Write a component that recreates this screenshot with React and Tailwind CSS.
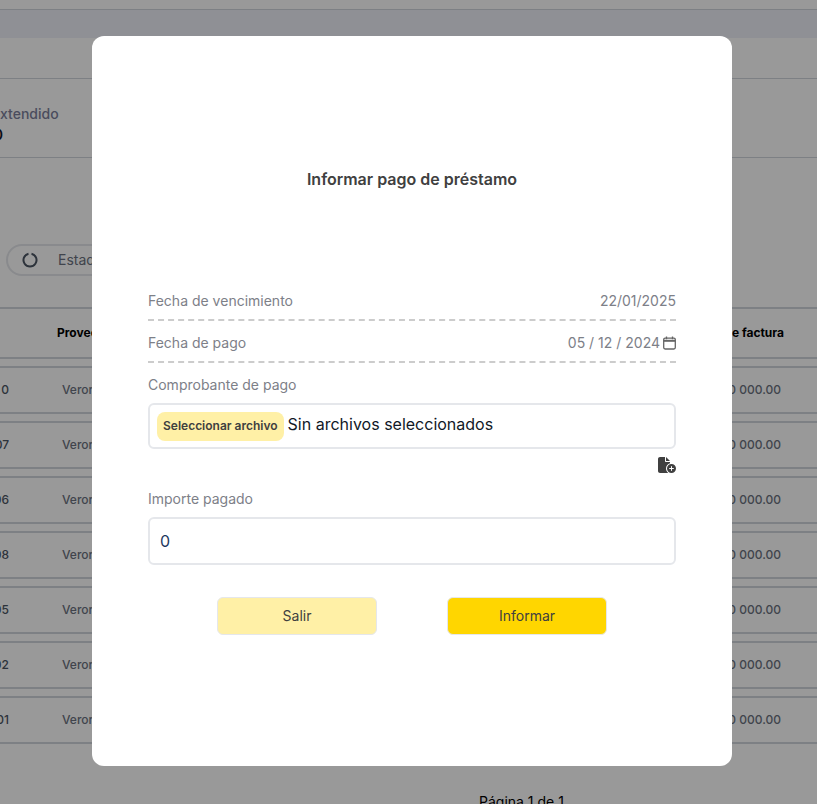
import React from 'react';
import { FaFileCirclePlus } from 'react-icons/fa6';

const rows = ['0', '07', '06', '08', '05', '02', '01'];

const CalendarIcon = () => (
  <svg width="13" height="14" viewBox="0 0 13 14" fill="none" stroke="#666666" strokeWidth="1.3">
    <rect x="0.7" y="2.2" width="11.6" height="10.8" rx="1.4" />
    <path d="M0.7 4.8h11.6" strokeWidth="2" />
    <path d="M3.5 0.6v2.6M9.5 0.6v2.6" />
  </svg>
);

const SpinnerIcon = () => (
  <svg width="16" height="16" viewBox="0 0 16 16" fill="none" stroke="#4b5563" strokeWidth="2">
    <path d="M9.5 1.7A6.5 6.5 0 1 1 6.5 1.7" />
  </svg>
);

const Background = () => (
  <div className="h-[804px] overflow-hidden bg-white">
    <div className="h-[9px]" />
    <div className="h-[29px] border-t border-gray-300 bg-[#eef0f8]" />
    <div className="h-[41px] border-b border-gray-300" />
    <div className="h-[79px] border-b border-gray-300 pt-[25px] text-sm">
      <div className="w-[200px] font-medium text-[#7c7f9c] leading-5">xtendido</div>
      <div className="mt-[1px] flex w-[3px] justify-end overflow-hidden font-semibold text-[#111827] leading-5">0</div>
    </div>
    <div className="h-[86px]" />
    <div className="ml-[6px] flex h-[32px] w-[200px] items-center rounded-full border-2 border-gray-200 pl-[14px] text-sm text-[#6b7280]">
      <SpinnerIcon />
      <span className="ml-[20px]">Estado</span>
    </div>
    <div className="h-[31px]" />
    <div className="flex h-[52px] items-center justify-between border-y-2 border-gray-300 pr-[33px] text-xs font-bold text-black">
      <span className="ml-[57px]">Proveedor</span>
      <span>Importe de factura</span>
    </div>
    <div className="mt-[7px] flex flex-col gap-[7px]">
      {rows.map((id) => (
        <div key={id} className="flex h-[48px] items-center justify-between border-y-2 border-gray-300 pr-[36px] text-xs font-medium text-[#6b7280]">
          <div className="flex items-center">
            <span className="flex w-[9px] justify-end overflow-hidden font-medium text-[#4b5563]">{id}</span>
            <span className="ml-[53px]">Veronica</span>
          </div>
          <span>100 000.00</span>
        </div>
      ))}
    </div>
    <div className="mt-[48px] pl-[479px] text-sm text-black">Página 1 de 1</div>
  </div>
);

export default function App() {
  return (
    <div className="relative h-[804px] overflow-hidden font-['Inter',sans-serif]">
      <Background />
      <div className="absolute inset-0 bg-black/40 pl-[92px] pt-[36px]">
        <div className="flex h-[730px] w-[640px] flex-col rounded-xl bg-white px-[56px]">
          <h2 className="mt-[132px] text-center text-base leading-[22px] font-semibold text-[#404040]">Informar pago de préstamo</h2>

          <div className="mt-[101px] flex h-[30px] items-start justify-between border-b-2 border-dashed border-[#cccccc] text-sm leading-5 text-[#7d8088]">
            <span>Fecha de vencimiento</span>
            <span>22/01/2025</span>
          </div>
          <div className="mt-[12px] flex h-[30px] items-start justify-between border-b-2 border-dashed border-[#cccccc] text-sm leading-5 text-[#7d8088]">
            <span>Fecha de pago</span>
            <span className="flex items-center gap-[3px]">05 / 12 / 2024 <CalendarIcon /></span>
          </div>

          <label className="mt-[12px] text-sm leading-5 text-[#7d8088]">Comprobante de pago</label>
          <div className="mt-[8px] flex h-[46px] items-center rounded-md border-2 border-[#e5e7eb] pl-[7px]">
            <button className="h-[29px] rounded-lg bg-[#fff0a6] px-[6px] text-xs font-semibold text-[#404040]">Seleccionar archivo</button>
            <span className="mb-[4px] ml-[4px] text-base text-[#111827]">Sin archivos seleccionados</span>
          </div>
          <div className="mt-[7px] flex justify-end">
            <FaFileCirclePlus className="text-[#404040]" size={18} />
          </div>

          <label className="mt-[15px] text-sm leading-5 text-[#7d8088]">Importe pagado</label>
          <div className="mt-[8px] flex h-[48px] items-center rounded-md border-2 border-[#e5e7eb] pl-[10px] text-base text-[#1e3a5f]">0</div>

          <div className="mt-[32px] flex justify-center gap-[70px]">
            <button className="h-[38px] w-[160px] rounded-md border border-[#e5e7eb] bg-[#fff0a6] text-sm text-[#404040]">Salir</button>
            <button className="h-[38px] w-[160px] rounded-md border border-[#e5e7eb] bg-[#ffd600] text-sm text-[#404040]">Informar</button>
          </div>
        </div>
      </div>
    </div>
  );
}
